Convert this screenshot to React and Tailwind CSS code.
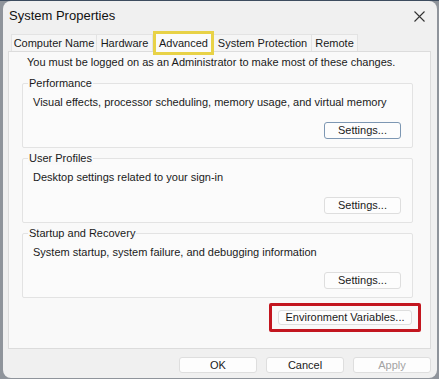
import React from "react";

const font = { fontFamily: '"Liberation Sans", Arial, sans-serif' };

function Btn({ children, className = "", disabled = false, focus = false }) {
  return (
    <div
      className={
        "flex items-center justify-center rounded-[3px] border bg-[#fdfdfd] text-[11px] leading-none whitespace-nowrap " +
        (focus ? "border-[#7d97b3] " : "border-[#dedede] ") +
        (disabled ? "text-[#a3a3a3] " : "text-[#1a1a1a] ") +
        className
      }
    >
      {children}
    </div>
  );
}

function Group({ label, text }) {
  return (
    <div className="relative h-[65px] rounded-[2px] border border-[#e3e3e3] bg-[#fbfbfb] pl-[10px] pr-[11px] pt-[11px] pb-[8px] flex flex-col">
      <span className="absolute -top-[8px] left-[5px] px-[1px] text-[11px] leading-[14px] text-[#1a1a1a] whitespace-nowrap bg-[#f9f9f9]">{label}</span>
      <div className="text-[11px] leading-[14px] text-[#1a1a1a] whitespace-nowrap">{text}</div>
      <div className="mt-auto flex justify-end">
        <Btn className="w-[77px] h-[17px]" focus={label === "Performance"}>Settings...</Btn>
      </div>
    </div>
  );
}

function Tab({ children, className = "" }) {
  return (
    <div className={"h-[17px] flex items-center justify-center border border-b-0 border-[#e3e3e3] bg-[#f5f5f5] " + className}>
      {children}
    </div>
  );
}

export default function App() {
  return (
    <div className="w-[439px] h-[379px] bg-[#8f949b] overflow-hidden" style={font}>
      <div className="h-[1px] bg-[#3d4c5f]" />
      <div className="ml-[3px] w-[434px] h-[377px] rounded-[8px] bg-[#f0f0f0] flex flex-col">
        {/* title bar */}
        <div className="h-[30px] flex items-center justify-between pl-[6px] pr-[12px]">
          <span className="text-[13px] text-[#111]">System Properties</span>
          <svg width="11" height="11" viewBox="0 0 11 11" className="text-[#333]">
            <path d="M0.5 0.5 L10.5 10.5 M10.5 0.5 L0.5 10.5" stroke="currentColor" strokeWidth="1.1" />
          </svg>
        </div>
        {/* tabs */}
        <div className="flex items-end pl-[8px] h-[20px] text-[11px] text-[#1a1a1a] leading-none">
          <Tab className="w-[86px]">Computer Name</Tab>
          <Tab className="w-[56px] border-l-0">Hardware</Tab>
          <div className="w-[61px] h-[24px] -mb-[4px] flex items-center justify-center border-[3px] border-[#e8d247] bg-[#fbfbfb] relative z-10">Advanced</div>
          <Tab className="w-[98px] border-l-0">System Protection</Tab>
          <Tab className="w-[46px] border-l-0">Remote</Tab>
        </div>
        {/* panel */}
        <div className="ml-[5px] mr-[6px] h-[298px] border border-[#dcdcdc] bg-[#f9f9f9] pl-[13px] pr-[17px] pt-[4px] flex flex-col">
          <div className="pl-[5px] text-[11px] leading-[12px] text-[#1a1a1a] whitespace-nowrap">
            You must be logged on as an Administrator to make most of these changes.
          </div>
          <div className="mt-[15px] flex flex-col gap-[10px]">
            <Group label="Performance" text="Visual effects, processor scheduling, memory usage, and virtual memory" />
            <Group label="User Profiles" text="Desktop settings related to your sign-in" />
            <Group label="Startup and Recovery" text="System startup, system failure, and debugging information" />
          </div>
          <div className="mt-[5px] flex justify-end -mr-[8px]">
            <div className="border-[3px] border-[#c3161f] rounded-[2px] w-[152px] h-[29px] pl-[6px] pt-[4px]">
              <Btn className="w-[134px] h-[15px]">Environment Variables...</Btn>
            </div>
          </div>
        </div>
        {/* bottom buttons */}
        <div className="mt-[8px] flex justify-end gap-[9px] pr-[6px]">
          <Btn className="w-[78px] h-[16px]">OK</Btn>
          <Btn className="w-[78px] h-[16px]">Cancel</Btn>
          <Btn className="w-[78px] h-[16px]" disabled>Apply</Btn>
        </div>
      </div>
    </div>
  );
}
